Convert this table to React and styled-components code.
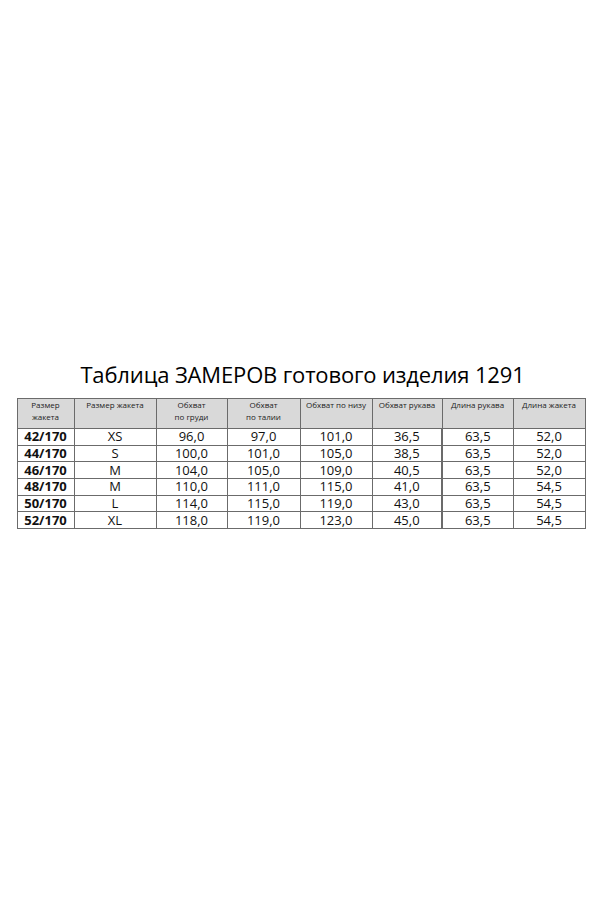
import styled, { createGlobalStyle } from "styled-components";

const Global = createGlobalStyle`
  html, body { margin: 0; padding: 0; background: #fff; }
  body { font-family: "Open Sans", "Liberation Sans", sans-serif; color: #000; }
`;

const Page = styled.div`
  width: 599px;
  height: 899px;
  padding-top: 359px;
  box-sizing: border-box;
  display: flex;
  flex-direction: column;
  align-items: center;
`;

const Title = styled.h1`
  margin: 0 0 8px 6px;
  font-size: 22px;
  font-weight: 400;
  line-height: 31px;
  letter-spacing: -0.15px;
  white-space: nowrap;
`;

const Table = styled.table`
  border-collapse: collapse;
  table-layout: fixed;
  width: 568px;
  margin-left: 3px;
`;

const Head = styled.th`
  background: #d9d9d9;
  border: 1px solid #6b6b6b;
  height: 29px;
  padding: 0 1px;
  vertical-align: top;
  font-size: 8px;
  font-weight: 400;
  line-height: 12px;
  color: #222;
  text-align: center;
  white-space: nowrap;
`;

const Cell = styled.td`
  border: 1px solid #6b6b6b;
  border-left-width: ${(p) => (p.$thick ? "2px" : "1px")};
  height: 15.7px;
  padding: 0;
  font-size: 13px;
  line-height: 15px;
  font-weight: ${(p) => (p.$bold ? 700 : 400)};
  text-align: center;
  color: #111;
`;

const widths = [57, 82, 71, 73, 72, 70, 71, 72];

const headers = [
  ["Размер", "жакета"],
  ["Размер жакета"],
  ["Обхват", "по груди"],
  ["Обхват", "по талии"],
  ["Обхват по низу"],
  ["Обхват рукава"],
  ["Длина рукава"],
  ["Длина жакета"],
];

const rows = [
  ["42/170", "XS", "96,0", "97,0", "101,0", "36,5", "63,5", "52,0"],
  ["44/170", "S", "100,0", "101,0", "105,0", "38,5", "63,5", "52,0"],
  ["46/170", "M", "104,0", "105,0", "109,0", "40,5", "63,5", "52,0"],
  ["48/170", "M", "110,0", "111,0", "115,0", "41,0", "63,5", "54,5"],
  ["50/170", "L", "114,0", "115,0", "119,0", "43,0", "63,5", "54,5"],
  ["52/170", "XL", "118,0", "119,0", "123,0", "45,0", "63,5", "54,5"],
];

export default function App() {
  return (
    <>
      <Global />
      <Page>
        <Title>Таблица ЗАМЕРОВ готового изделия 1291</Title>
        <Table>
          <colgroup>
            {widths.map((w, i) => (
              <col key={i} style={{ width: w }} />
            ))}
          </colgroup>
          <thead>
            <tr>
              {headers.map((h, i) => (
                <Head key={i}>
                  {h.map((line, j) => (
                    <div key={j}>{line}</div>
                  ))}
                </Head>
              ))}
            </tr>
          </thead>
          <tbody>
            {rows.map((r, i) => (
              <tr key={i}>
                {r.map((v, j) => (
                  <Cell key={j} $bold={j === 0} $thick={j === 6}>
                    {v}
                  </Cell>
                ))}
              </tr>
            ))}
          </tbody>
        </Table>
      </Page>
    </>
  );
}
